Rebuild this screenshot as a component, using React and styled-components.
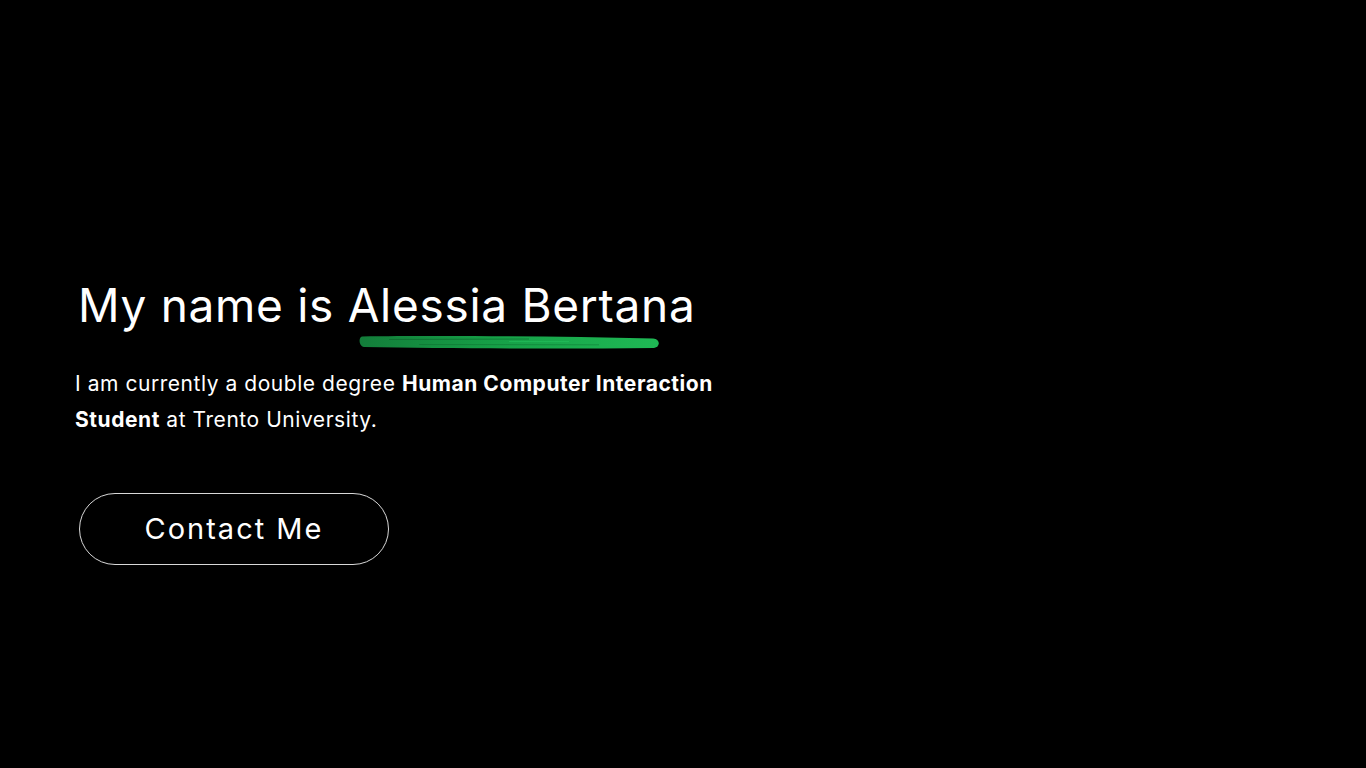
import React from "react";
import styled, { createGlobalStyle } from "styled-components";

const Global = createGlobalStyle`
  html, body {
    margin: 0;
    padding: 0;
    background: #000;
  }
  body {
    font-family: Inter, "Liberation Sans", sans-serif;
    color: #fff;
  }
`;

const Page = styled.main`
  width: 1366px;
  height: 768px;
  background: #000;
  box-sizing: border-box;
  padding: 277px 0 0 75px;
`;

const Hero = styled.section`
  display: flex;
  flex-direction: column;
  align-items: flex-start;
`;

const Title = styled.h1`
  position: relative;
  margin: 0 0 0 3px;
  font-family: Inter, "Liberation Sans", sans-serif;
  font-weight: 400;
  font-size: 46px;
  letter-spacing: 0.7px;
  line-height: 56px;
  color: #fff;
`;

const Brush = styled.svg`
  position: absolute;
  left: 281px;
  top: 57px;
  width: 302px;
  height: 16px;
`;

const Intro = styled.p`
  margin: 33px 0 0 0;
  font-size: 21px;
  line-height: 36px;
  font-weight: 400;
  letter-spacing: 0.55px;
  color: #fff;
  max-width: 660px;

  strong {
    font-weight: 700;
  }
`;

const ContactButton = styled.button`
  margin: 55px 0 0 4px;
  width: 310px;
  height: 72px;
  border: 1px solid #d8d8d8;
  border-radius: 36px;
  background: transparent;
  color: #fff;
  font-family: Inter, "Liberation Sans", sans-serif;
  font-size: 29px;
  font-weight: 400;
  letter-spacing: 2px;
  padding: 0 0 2px 0;
  cursor: pointer;
`;

function BrushStroke() {
  return (
    <Brush viewBox="0 0 302 16" preserveAspectRatio="none">
      <defs>
        <linearGradient id="g" x1="0" x2="1" y1="0" y2="0">
          <stop offset="0" stopColor="#137d3a" />
          <stop offset="0.45" stopColor="#16a047" />
          <stop offset="1" stopColor="#1fb955" />
        </linearGradient>
      </defs>
      <path
        d="M3 2.5 C 70 1.5, 190 2, 294 4.5 C 301.5 5, 301.5 13, 295 14 C 200 15, 90 14.5, 5 13 C -0.5 12, -0.5 3, 3 2.5 Z"
        fill="url(#g)"
      />
      <path d="M30 5.5 L 170 5" stroke="#0c5f2a" strokeWidth="1" opacity="0.55" />
      <path d="M60 10.5 L 240 10.8" stroke="#0c5f2a" strokeWidth="0.8" opacity="0.45" />
      <path d="M150 7.5 L 210 7.6" stroke="#2bd068" strokeWidth="0.8" opacity="0.5" />
    </Brush>
  );
}

export default function App() {
  return (
    <>
      <Global />
      <Page>
        <Hero>
          <Title>
            My name is Alessia Bertana
            <BrushStroke />
          </Title>
          <Intro>
            I am currently a double degree <strong>Human Computer Interaction Student</strong> at
            Trento University.
          </Intro>
          <ContactButton>Contact Me</ContactButton>
        </Hero>
      </Page>
    </>
  );
}
